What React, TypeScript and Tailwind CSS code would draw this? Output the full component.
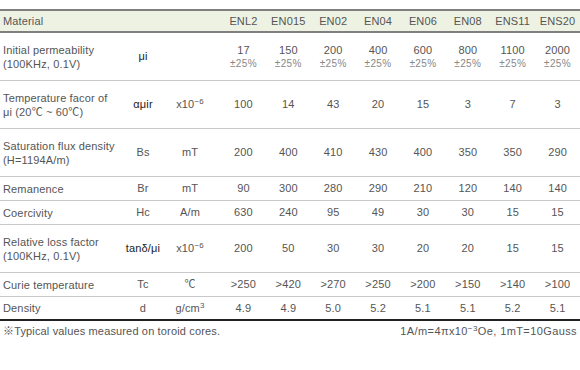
import React from 'react';

type Row = {
  label: React.ReactNode;
  symbol: React.ReactNode;
  unit: React.ReactNode;
  values: React.ReactNode[];
  tall?: boolean;
  darkSymbol?: boolean;
};

const MATERIALS = ['ENL2', 'EN015', 'EN02', 'EN04', 'EN06', 'EN08', 'ENS11', 'ENS20'];

const Sup = ({ children }: { children: React.ReactNode }) => (
  <span className="relative -top-[4px] text-[8px]">{children}</span>
);

const x10m6 = (
  <span>
    x10<Sup>−6</Sup>
  </span>
);

const perm = (v: string) => (
  <div className="flex flex-col items-center leading-[13px]">
    <span>{v}</span>
    <span className="text-[10px] tracking-[0.4px] text-[#888]">±25%</span>
  </div>
);

const ROWS: Row[] = [
  {
    label: (
      <>
        Initial permeability
        <br />
        (100KHz, 0.1V)
      </>
    ),
    symbol: 'μi',
    unit: '',
    values: ['17', '150', '200', '400', '600', '800', '1100', '2000'].map(perm),
    tall: true,
    darkSymbol: true,
  },
  {
    label: (
      <>
        Temperature facor of
        <br />
        μi (20℃ ~ 60℃)
      </>
    ),
    symbol: 'αμir',
    unit: x10m6,
    values: ['100', '14', '43', '20', '15', '3', '7', '3'],
    tall: true,
    darkSymbol: true,
  },
  {
    label: (
      <>
        Saturation flux density
        <br />
        (H=1194A/m)
      </>
    ),
    symbol: 'Bs',
    unit: 'mT',
    values: ['200', '400', '410', '430', '400', '350', '350', '290'],
    tall: true,
  },
  {
    label: 'Remanence',
    symbol: 'Br',
    unit: 'mT',
    values: ['90', '300', '280', '290', '210', '120', '140', '140'],
  },
  {
    label: 'Coercivity',
    symbol: 'Hc',
    unit: 'A/m',
    values: ['630', '240', '95', '49', '30', '30', '15', '15'],
  },
  {
    label: (
      <>
        Relative loss factor
        <br />
        (100KHz, 0.1V)
      </>
    ),
    symbol: 'tanδ/μi',
    unit: x10m6,
    values: ['200', '50', '30', '30', '20', '20', '15', '15'],
    tall: true,
    darkSymbol: true,
  },
  {
    label: 'Curie temperature',
    symbol: 'Tc',
    unit: '℃',
    values: ['>250', '>420', '>270', '>250', '>200', '>150', '>140', '>100'],
  },
  {
    label: 'Density',
    symbol: 'd',
    unit: (
      <span>
        g/cm<Sup>3</Sup>
      </span>
    ),
    values: ['4.9', '4.9', '5.0', '5.2', '5.1', '5.1', '5.2', '5.1'],
  },
];

const GRID = 'grid grid-cols-[120px_46px_55px_repeat(8,minmax(0,1fr))]';

export default function App() {
  return (
    <div
      className="w-[580px] h-[370px] bg-white pt-[9px] text-[11px] tracking-[0.15px] text-[#555]"
      style={{ fontFamily: '"Liberation Sans", "Noto Sans CJK KR", Arial, sans-serif' }}
    >
      {/* Header */}
      <div className={`${GRID} h-[24px] items-center border-y-2 border-[#7f7f7f] bg-[#eef2e3]`}>
        <div className="col-span-3 pl-[3px]">Material</div>
        {MATERIALS.map((m) => (
          <div key={m} className="text-center">
            {m}
          </div>
        ))}
      </div>

      {/* Body */}
      {ROWS.map((row, i) => {
        const last = i === ROWS.length - 1;
        return (
          <div
            key={i}
            className={`${GRID} items-center ${row.tall ? 'h-[48px]' : 'h-[24px]'} ${
              last ? 'border-b-2 border-[#222]' : 'border-b border-[#c9c9c9]'
            }`}
          >
            <div className="pl-[3px] leading-[14px]">{row.label}</div>
            <div className={`text-center ${row.darkSymbol ? 'text-[#222]' : ''}`}>{row.symbol}</div>
            <div className="pr-[7px] text-center">{row.unit}</div>
            {row.values.map((v, j) => (
              <div key={j} className="text-center">
                {v}
              </div>
            ))}
          </div>
        );
      })}

      {/* Footer notes */}
      <div className="flex justify-between pt-[3px] leading-[14px]">
        <span className="pl-[3px]">※Typical values measured on toroid cores.</span>
        <span className="pr-[3px] tracking-[0.4px]">
          1A/m=4πx10<Sup>−3</Sup>Oe, 1mT=10Gauss
        </span>
      </div>
    </div>
  );
}
